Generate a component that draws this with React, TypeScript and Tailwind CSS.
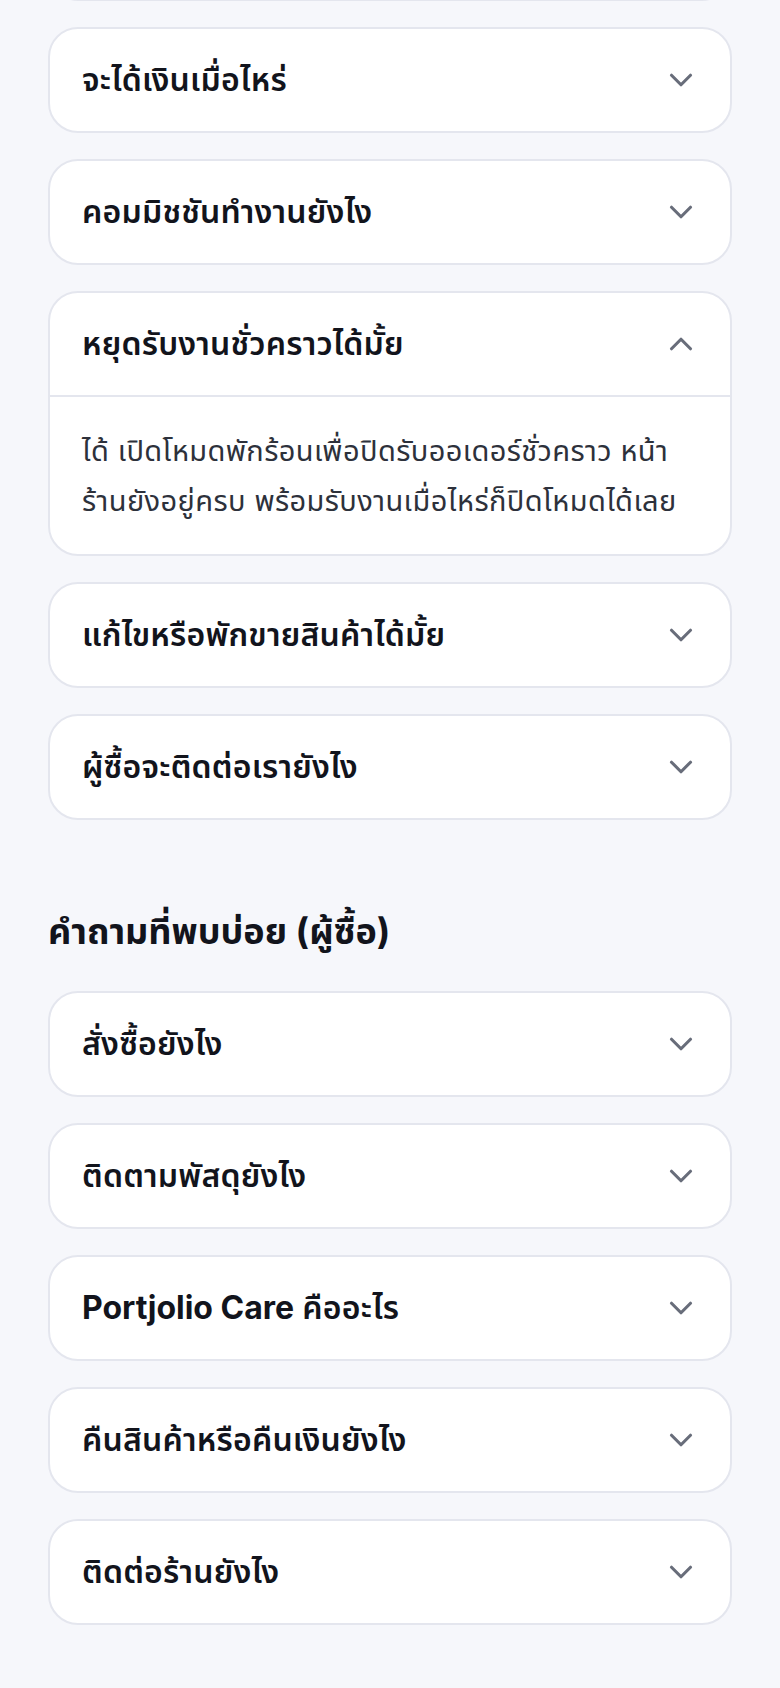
import { ChevronDown, ChevronUp } from "lucide-react"

type Item = {
  q: React.ReactNode
  a?: React.ReactNode
  open?: boolean
}

const sellerFaq: Item[] = [
  { q: "จะได้เงินเมื่อไหร่" },
  { q: "คอมมิชชันทำงานยังไง" },
  {
    q: "หยุดรับงานชั่วคราวได้มั้ย",
    open: true,
    a: (
      <>
        ได้ เปิดโหมดพักร้อนเพื่อปิดรับออเดอร์ชั่วคราว หน้า
        <br />
        ร้านยังอยู่ครบ พร้อมรับงานเมื่อไหร่ก็ปิดโหมดได้เลย
      </>
    ),
  },
  { q: "แก้ไขหรือพักขายสินค้าได้มั้ย" },
  { q: "ผู้ซื้อจะติดต่อเรายังไง" },
]

const buyerFaq: Item[] = [
  { q: "สั่งซื้อยังไง" },
  { q: "ติดตามพัสดุยังไง" },
  {
    q: (
      <>
        <span className="font-bold tracking-normal">Portjolio Care</span> คืออะไร
      </>
    ),
  },
  { q: "คืนสินค้าหรือคืนเงินยังไง" },
  { q: "ติดต่อร้านยังไง" },
]

function FaqCard({ item }: { item: Item }) {
  const Icon = item.open ? ChevronUp : ChevronDown
  return (
    <div className="rounded-[30px] border-2 border-[#e4e6ee] bg-white overflow-hidden">
      <div className="flex items-center justify-between pl-[32px] pr-[30px] py-[28px]">
        <span className="text-[32px] leading-[46px] font-semibold text-[#12141c] tracking-[0.2px]">{item.q}</span>
        <Icon size={38} strokeWidth={2} className="text-[#686d7a] shrink-0" />
      </div>
      {item.open && (
        <div className="border-t-2 border-[#e4e6ee] pl-[32px] pr-[30px] pt-[29px] pb-[28px]">
          <p className="text-[29px] leading-[50px] text-[#2d313b] tracking-[0.4px]">{item.a}</p>
        </div>
      )}
    </div>
  )
}

export default function App() {
  return (
    <div
      className="min-h-screen bg-[#f6f7fb] overflow-hidden"
      style={{ fontFamily: 'Inter, "Noto Sans Thai", "Noto Sans Thai UI", "Noto Sans", sans-serif' }}
    >
      <div className="px-[48px] pb-[64px]">
        {/* bottom edge of the card scrolled above */}
        <div className="-mt-[29px] mb-[26px] h-[30px] rounded-b-[30px] border-2 border-t-0 border-[#e4e6ee] bg-white" />

        {/* Seller questions */}
        <div className="flex flex-col gap-[26px]">
          {sellerFaq.map((item, i) => (
            <FaqCard key={i} item={item} />
          ))}
        </div>

        {/* Buyer questions */}
        <h2 className="mt-[85px] mb-[34px] text-[36px] leading-[52px] font-bold text-[#12141c]">
          คำถามที่พบบ่อย (ผู้ซื้อ)
        </h2>
        <div className="flex flex-col gap-[26px]">
          {buyerFaq.map((item, i) => (
            <FaqCard key={i} item={item} />
          ))}
        </div>
      </div>
    </div>
  )
}
